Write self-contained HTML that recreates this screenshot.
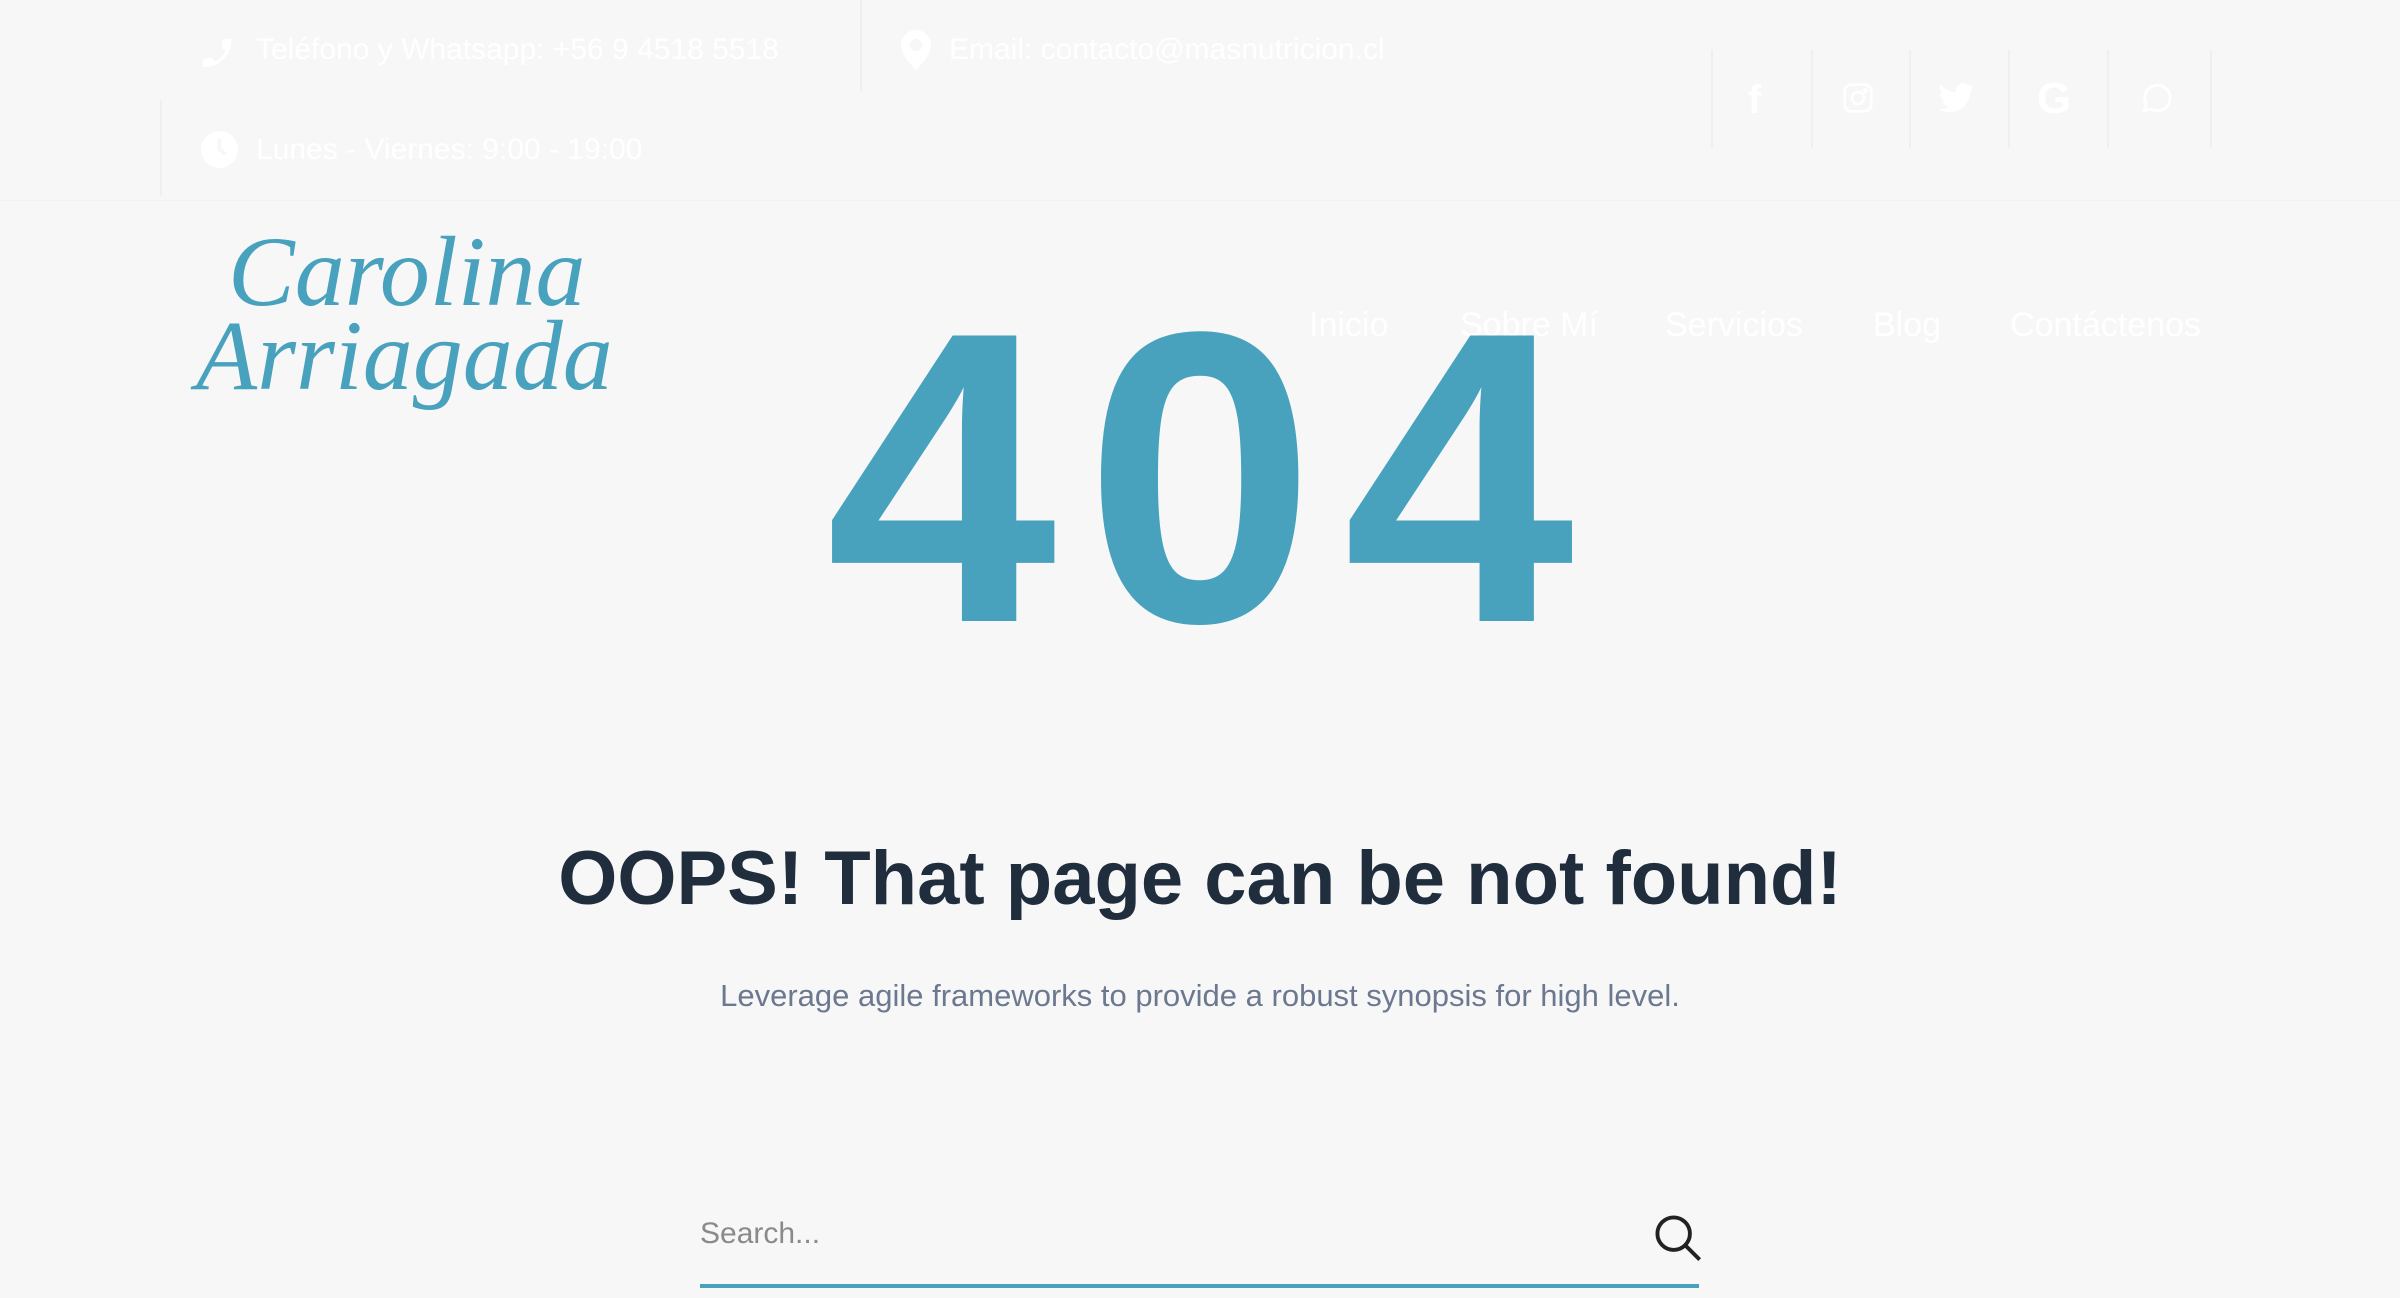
<!DOCTYPE html>
<html><head><meta charset="utf-8"><style>
*{margin:0;padding:0;box-sizing:border-box}
body{width:2400px;height:1298px;background:#f7f7f7;font-family:"Liberation Sans",sans-serif;position:relative;overflow:hidden}
.a{position:absolute;white-space:nowrap}
.w{color:#fff;font-size:30px}
.nav{color:#fff;font-size:34px;top:306px}
.vl{position:absolute;width:2px;background:#efefef}
</style></head><body>
<div class="vl" style="left:860px;top:0;height:92px"></div>
<div class="vl" style="left:160px;top:100px;height:96px"></div>
<div class="a" style="left:0;top:200px;width:2400px;height:1px;background:#f2f2f2"></div>
<svg class="a" style="left:198px;top:34px" width="38" height="38" viewBox="0 0 24 24"><path fill="#fff" d="M20 15.5c-1.2 0-2.4-.2-3.6-.6-.3-.1-.7 0-1 .2l-2.2 2.2c-2.8-1.4-5.1-3.8-6.6-6.6l2.2-2.2c.3-.3.4-.7.2-1-.3-1.1-.5-2.3-.5-3.5 0-.6-.4-1-1-1H4c-.6 0-1 .4-1 1 0 9.4 7.6 17 17 17 .6 0 1-.4 1-1v-3.5c0-.6-.4-1-1-1z" transform="scale(-1,1) translate(-24,0)"/></svg>
<div class="a w" style="left:256px;top:33px">Teléfono y Whatsapp: +56 9 4518 5518</div>
<svg class="a" style="left:901px;top:30px" width="30" height="40" viewBox="0 0 24 32"><path fill="#fff" d="M12 0C5.4 0 0 5.4 0 12c0 9 12 20 12 20s12-11 12-20C24 5.4 18.6 0 12 0zm0 17a5 5 0 110-10 5 5 0 010 10z"/></svg>
<div class="a w" style="left:949px;top:33px">Email: contacto@masnutricion.cl</div>
<svg class="a" style="left:201px;top:131px" width="37" height="37" viewBox="0 0 24 24"><circle cx="12" cy="12" r="12" fill="#fff"/><path d="M12 5v7l4 3" stroke="#f7f7f7" stroke-width="2.5" fill="none"/></svg>
<div class="a w" style="left:256px;top:133px">Lunes - Viernes: 9:00 - 19:00</div>
<div class="vl" style="left:1711px;top:50px;height:98px"></div>
<div class="vl" style="left:1811px;top:50px;height:98px"></div>
<div class="vl" style="left:1909px;top:50px;height:98px"></div>
<div class="vl" style="left:2008px;top:50px;height:98px"></div>
<div class="vl" style="left:2107px;top:50px;height:98px"></div>
<div class="vl" style="left:2210px;top:50px;height:98px"></div>
<div class="a" style="left:1748px;top:78px;color:#fff;font-size:40px;font-weight:bold">f</div>
<svg class="a" style="left:1842px;top:82px" width="32" height="32" viewBox="0 0 24 24" fill="none" stroke="#fff" stroke-width="2"><rect x="2" y="2" width="20" height="20" rx="5"/><circle cx="12" cy="12" r="4.5"/><circle cx="17.5" cy="6.5" r="1" fill="#fff"/></svg>
<svg class="a" style="left:1938px;top:82px" width="36" height="32" viewBox="0 0 24 20"><path fill="#fff" d="M24 2.3c-.9.4-1.8.7-2.8.8 1-.6 1.8-1.6 2.2-2.7-1 .6-2 1-3.1 1.2A4.9 4.9 0 0012 6.1C7.9 5.9 4.3 4 1.9 1 .5 3.3 1.3 6.2 3.4 7.6c-.8 0-1.6-.2-2.2-.6 0 2.4 1.7 4.4 3.9 4.8-.7.2-1.5.2-2.2.1.6 2 2.4 3.4 4.6 3.4A9.9 9.9 0 010 17.3 14 14 0 007.5 19.5c9.1 0 14.3-7.7 14-14.6 1-.7 1.8-1.6 2.5-2.6z"/></svg>
<div class="a" style="left:2037px;top:74px;color:#fff;font-size:44px;font-weight:bold">G</div>
<svg class="a" style="left:2140px;top:81px" width="34" height="34" viewBox="0 0 24 24" fill="none" stroke="#fff" stroke-width="2"><path d="M3 21l1.5-4.5A9 9 0 1112 21a9 9 0 01-4.5-1.2z"/></svg>
<div class="a nav" style="left:1309px">Inicio</div>
<div class="a nav" style="left:1460px">Sobre Mí</div>
<div class="a nav" style="left:1665px">Servicios</div>
<div class="a nav" style="left:1873px">Blog</div>
<div class="a nav" style="left:2010px">Contáctenos</div>
<div class="a" style="left:228px;top:222px;color:#48a1bd;font-family:'Liberation Serif',serif;font-style:italic;font-size:100px;line-height:1">Carolina</div>
<div class="a" style="left:196px;top:306px;color:#48a1bd;font-family:'Liberation Serif',serif;font-style:italic;font-size:100px;line-height:1">Arriagada</div>
<div class="a" style="left:0;width:2400px;text-align:center;top:270px;color:#48a2bd;font-size:415px;line-height:415px;font-weight:bold;letter-spacing:28px;padding-left:28px">404</div>
<div class="a" style="left:0;width:2400px;text-align:center;top:831px;color:#1f2d3d;font-size:76px;font-weight:bold;line-height:96px">OOPS! That page can be not found!</div>
<div class="a" style="left:0;width:2400px;text-align:center;top:978px;color:#6b7890;font-size:31px">Leverage agile frameworks to provide a robust synopsis for high level.</div>
<div class="a" style="left:700px;top:1217px;color:#8a8a8a;font-size:30px">Search...</div>
<svg class="a" style="left:1652px;top:1212px" width="52" height="52" viewBox="0 0 24 24" fill="none" stroke="#222" stroke-width="1.8"><circle cx="10" cy="10" r="7.5"/><path d="M15.5 15.5l6.5 6.5"/></svg>
<div class="a" style="left:700px;top:1284px;width:999px;height:4px;background:#48a1bd"></div>
</body></html>
